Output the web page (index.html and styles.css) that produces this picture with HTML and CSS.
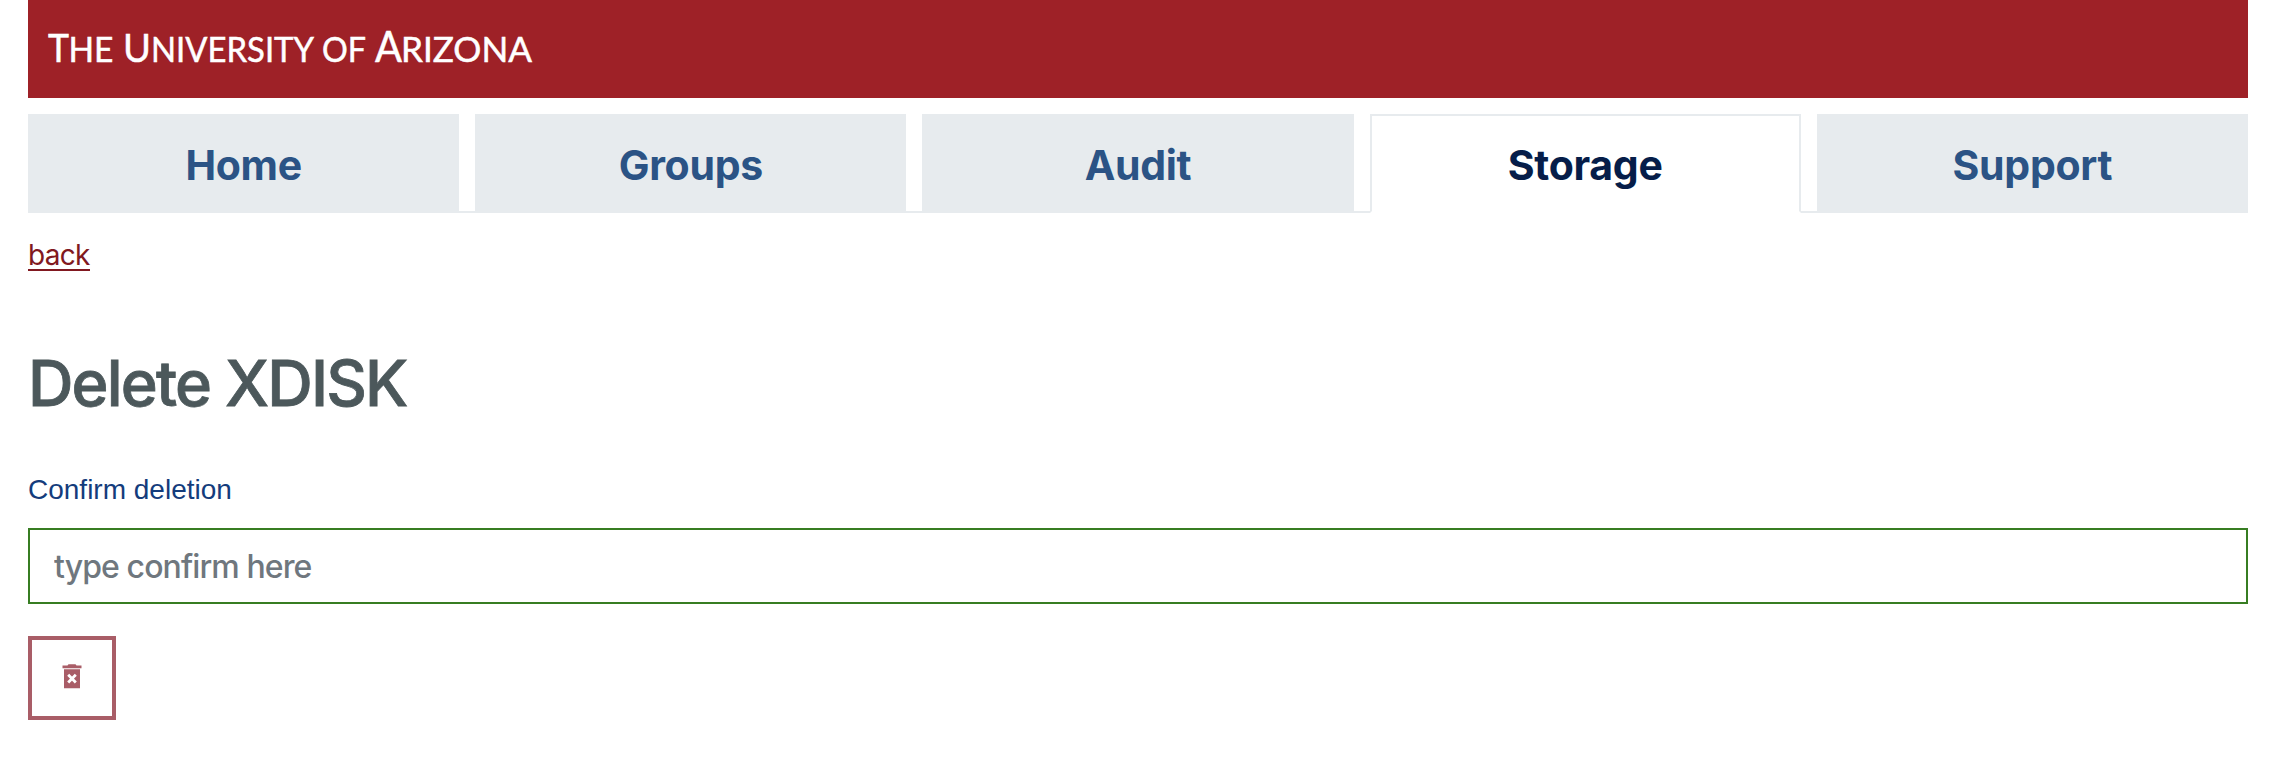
FILE: index.html
```html
<!DOCTYPE html>
<html lang="en">
<head>
<meta charset="utf-8">
<title>Delete XDISK</title>
<link rel="stylesheet" href="styles.css">
</head>
<body>
<div class="page">
  <header class="banner">
    <svg class="wordmark" width="500" height="50" viewBox="0 0 500 50" role="img" aria-label="The University of Arizona">
      <text y="41.5" x="0" textLength="21" lengthAdjust="spacingAndGlyphs">T</text>
      <text class="small" y="41.5" x="20.5" textLength="45" lengthAdjust="spacingAndGlyphs">HE</text>
      <text y="41.5" x="75" textLength="28" lengthAdjust="spacingAndGlyphs">U</text>
      <text class="small" y="41.5" x="103" textLength="163" lengthAdjust="spacingAndGlyphs">NIVERSITY</text>
      <text class="small" y="41.5" x="274" textLength="44" lengthAdjust="spacingAndGlyphs">OF</text>
      <text class="tall" y="41.5" x="327" textLength="27" lengthAdjust="spacingAndGlyphs">A</text>
      <text class="small" y="41.5" x="353" textLength="131" lengthAdjust="spacingAndGlyphs">RIZONA</text>
    </svg>
  </header>
  <nav class="tabs">
    <a class="tab">Home</a>
    <a class="tab">Groups</a>
    <a class="tab">Audit</a>
    <a class="tab active">Storage</a>
    <a class="tab">Support</a>
  </nav>
  <main class="content">
    <a class="back">back</a>
    <h1 class="title">Delete XDISK</h1>
    <label class="label" for="confirm">Confirm deletion</label>
    <input class="field" id="confirm" type="text" placeholder="type confirm here">
    <button class="delete" type="button" aria-label="Delete">
      <svg width="20" height="25" viewBox="0 0 20 25">
        <path fill="currentColor" d="M.5 1.5H5.5L6.5 .3H13.5L14.5 1.5H19.5V4.3H.5zM2 5.3H18V24.3H2z"/>
        <path stroke="#fff" stroke-width="2.8" d="M6.2 10.8 13.8 18.6M13.8 10.8 6.2 18.6"/>
      </svg>
    </button>
  </main>
</div>
</body>
</html>
```
FILE: styles.css
```css
* { box-sizing: border-box; }
body { margin: 0; background: #fff; font-family: Inter, "Liberation Sans", sans-serif; }
.page { padding: 0 34px 0 28px; }
.banner { height: 98px; padding: 20px 20px 0; background: #9e2127; }
.wordmark { display: block; font-family: Lato, sans-serif; font-size: 38px; fill: #fff; stroke: #fff; stroke-width: .5px; overflow: visible; }
.wordmark .small { font-size: 34px; }
.wordmark .tall { font-size: 42px; }
.tabs { display: grid; grid-template-columns: repeat(5, 1fr); gap: 16px; height: 99px; margin-top: 16px; background: linear-gradient(#e7ebee, #e7ebee) bottom / 100% 2px no-repeat; }
.tab { display: flex; align-items: center; justify-content: center; padding-top: 3px; border: 2px solid #e7ebee; background: #e7ebee; color: #2b5385; font-size: 41px; font-weight: 700; letter-spacing: -.3px; }
.tab.active { border-bottom-color: #fff; background: #fff; color: #061d49; }
.content { display: flex; flex-direction: column; align-items: flex-start; }
.back { margin-top: 28px; height: 30px; line-height: 29px; border-bottom: 2px solid #811820; color: #811820; font-size: 28px; letter-spacing: -.7px; }
.title { margin: 73px 0 0; line-height: 78px; color: #4c585b; font-size: 63px; font-weight: 500; letter-spacing: -1.85px; -webkit-text-stroke: .8px #4c585b; }
.label { margin-top: 52px; line-height: 32px; color: #143c7c; font-family: "Liberation Sans", sans-serif; font-size: 28px; }
.field { width: 100%; height: 76px; margin-top: 22px; padding: 0 24px; border: 2px solid #377d22; border-radius: 0; outline: none; background: #fff; font-family: inherit; font-size: 32px; letter-spacing: -.9px; }
.field::placeholder { color: #6f777e; opacity: 1; font-weight: 500; }
.delete { display: flex; align-items: center; justify-content: center; width: 88px; height: 84px; margin-top: 32px; padding: 0 0 4px; border: 4px solid #a95d67; background: #fff; color: #a95d67; }
```
